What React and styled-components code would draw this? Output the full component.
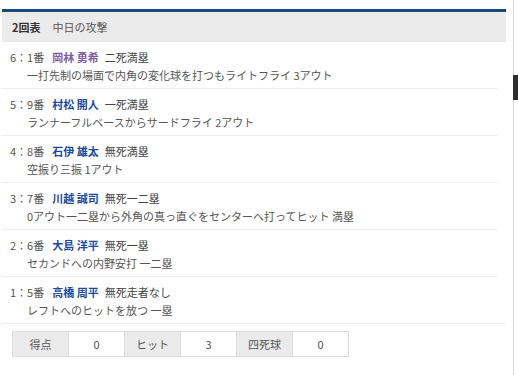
import React from "react";
import styled, { createGlobalStyle } from "styled-components";

const Global = createGlobalStyle`
  html, body { margin: 0; padding: 0; background: #fff; }
  body {
    font-family: "Noto Sans CJK JP", "Liberation Sans", sans-serif;
    font-size: 11px;
    color: #444;
    width: 518px;
    height: 375px;
    overflow: hidden;
  }
`;

const Page = styled.div`
  position: relative;
  width: 518px;
  height: 375px;
  padding: 9px 0 0 2px;
  box-sizing: border-box;
`;

const Panel = styled.section`
  width: 504px;
`;

const InningHead = styled.header`
  border-top: 3px solid #1c4a78;
  background: #ebebeb;
  height: 30px;
  display: flex;
  align-items: center;
  gap: 12px;
  padding-left: 10px;
  line-height: 1;
`;

const InningNo = styled.span`
  font-weight: bold;
  color: #333;
`;

const TeamAttack = styled.span`
  color: #555;
`;

const PlayList = styled.ol`
  list-style: none;
  margin: 0;
  padding: 0;
  border-bottom: 1px solid #eeeeee;
`;

const Play = styled.li`
  padding: 6px 0 4px 8px;
  margin-right: 8px;
  border-bottom: ${(p) => (p.$last ? "none" : "1px solid #eeeeee")};
  line-height: 18px;
  margin-left: ${(p) => (p.$last ? "0" : "0")};
`;

const Situation = styled.div`
  display: flex;
  align-items: baseline;
  white-space: nowrap;
`;

const Order = styled.span`
  color: #555;
  margin-right: 8px;
`;

const Batter = styled.span`
  font-weight: bold;
  color: ${(p) => (p.$visited ? "#7d5ea6" : "#1a4a9c")};
  margin-right: 6px;
`;

const Runners = styled.span`
  color: #444;
`;

const Result = styled.div`
  padding-left: 17px;
  color: #555;
  white-space: nowrap;
`;

const Summary = styled.table`
  margin: 7px 0 0 10px;
  border-collapse: collapse;
  table-layout: fixed;
`;

const Cell = styled.td`
  width: 55px;
  height: 24px;
  padding: 0;
  border: 1px solid #dcdcdc;
  text-align: center;
  color: #555;
  background: ${(p) => (p.$label ? "#ebebeb" : "#ffffff")};
`;

const Rail = styled.div`
  position: absolute;
  top: 0;
  right: 4px;
  width: 1px;
  height: 375px;
  background: #d6d6d6;
`;

const RailKnob = styled.div`
  position: absolute;
  top: 75px;
  right: 0;
  width: 5px;
  height: 25px;
  background: #2e2e2e;
`;

const plays = [
  { no: "6", order: "1番", name: "岡林 勇希", runners: "二死満塁", result: "一打先制の場面で内角の変化球を打つもライトフライ 3アウト", visited: true },
  { no: "5", order: "9番", name: "村松 開人", runners: "一死満塁", result: "ランナーフルベースからサードフライ 2アウト" },
  { no: "4", order: "8番", name: "石伊 雄太", runners: "無死満塁", result: "空振り三振 1アウト" },
  { no: "3", order: "7番", name: "川越 誠司", runners: "無死一二塁", result: "0アウト一二塁から外角の真っ直ぐをセンターへ打ってヒット 満塁" },
  { no: "2", order: "6番", name: "大島 洋平", runners: "無死一塁", result: "セカンドへの内野安打 一二塁" },
  { no: "1", order: "5番", name: "高橋 周平", runners: "無死走者なし", result: "レフトへのヒットを放つ 一塁" },
];

const totals = [
  ["得点", "0"],
  ["ヒット", "3"],
  ["四死球", "0"],
];

export default function App() {
  return (
    <>
      <Global />
      <Page>
        <Panel>
          <InningHead>
            <InningNo>2回表</InningNo>
            <TeamAttack>中日の攻撃</TeamAttack>
          </InningHead>
          <PlayList>
            {plays.map((p, i) => (
              <Play key={p.no} $last={i === plays.length - 1}>
                <Situation>
                  <Order>{p.no}：{p.order}</Order>
                  <Batter $visited={p.visited}>{p.name}</Batter>
                  <Runners>{p.runners}</Runners>
                </Situation>
                <Result>{p.result}</Result>
              </Play>
            ))}
          </PlayList>
          <Summary>
            <tbody>
              <tr>
                {totals.map(([label, value]) => (
                  <React.Fragment key={label}>
                    <Cell $label>{label}</Cell>
                    <Cell>{value}</Cell>
                  </React.Fragment>
                ))}
              </tr>
            </tbody>
          </Summary>
        </Panel>
        <Rail />
        <RailKnob />
      </Page>
    </>
  );
}
